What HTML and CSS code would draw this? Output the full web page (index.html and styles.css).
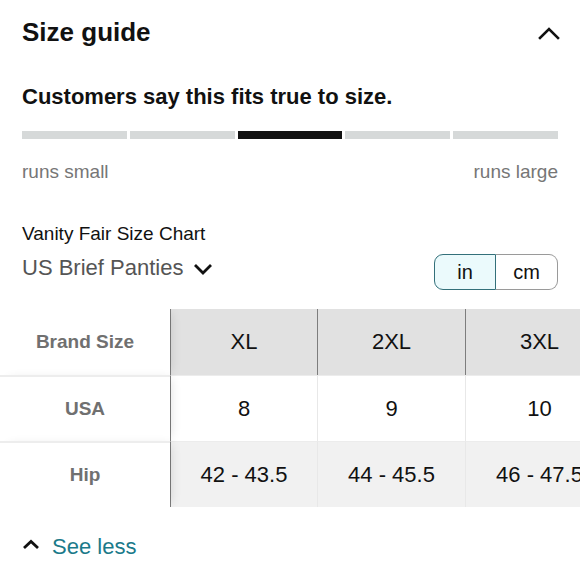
FILE: index.html
```html
<!DOCTYPE html>
<html lang="en">
<head>
<meta charset="utf-8">
<title>Size guide</title>
<link rel="stylesheet" href="styles.css">
</head>
<body>
<div class="pad">
  <div class="head">
    <h2 class="title">Size guide</h2>
    <svg class="chev-up" width="22" height="14" viewBox="0 0 22 14"><path d="M2 12 L11 3 L20 12" fill="none" stroke="#111" stroke-width="2.6" stroke-linecap="square"/></svg>
  </div>
  <p class="fit">Customers say this fits true to size.</p>
  <div class="bars">
    <span class="bar"></span><span class="bar"></span><span class="bar on"></span><span class="bar"></span><span class="bar"></span>
  </div>
  <div class="scale"><span>runs small</span><span>runs large</span></div>
  <div class="chart-name">Vanity Fair Size Chart</div>
  <div class="chart-row">
    <div class="chart-type">US Brief Panties
      <svg class="chev-down" width="20" height="12" viewBox="0 0 20 12"><path d="M2 2 L10 10 L18 2" fill="none" stroke="#111" stroke-width="2.8"/></svg>
    </div>
    <div class="toggle"><span class="opt sel">in</span><span class="opt">cm</span></div>
  </div>
</div>
<div class="table-wrap">
  <div class="grid">
    <div class="cell lab hdr-row">Brand Size</div>
    <div class="cell hd first">XL</div>
    <div class="cell hd">2XL</div>
    <div class="cell hd">3XL</div>

    <div class="cell lab">USA</div>
    <div class="cell dt first">8</div>
    <div class="cell dt">9</div>
    <div class="cell dt">10</div>

    <div class="cell lab">Hip</div>
    <div class="cell dt alt first">42 - 43.5</div>
    <div class="cell dt alt">44 - 45.5</div>
    <div class="cell dt alt">46 - 47.5</div>
  </div>
</div>
<div class="pad">
  <a class="see-less" href="#">
    <svg width="18" height="11" viewBox="0 0 18 11"><path d="M2 9 L9 2.5 L16 9" fill="none" stroke="#111" stroke-width="2.8"/></svg>
    <span>See less</span>
  </a>
</div>
</body>
</html>
```
FILE: styles.css
```css
* { box-sizing: border-box; }
html, body { margin: 0; padding: 0; background: #fff; }
body {
  font-family: "Liberation Sans", Arial, sans-serif;
  color: #111;
  width: 580px;
  overflow: hidden;
}
.pad { padding: 0 22px; }

.head {
  display: flex;
  justify-content: space-between;
  align-items: center;
  padding-top: 17px;
}
.title {
  margin: 0;
  font-size: 26px;
  line-height: 30px;
  font-weight: bold;
  color: #111;
}
.chev-up { margin-right: -2px; margin-top: 2px; }

.fit {
  margin: 37px 0 0;
  font-size: 22px;
  line-height: 26px;
  font-weight: bold;
}

.bars {
  display: flex;
  gap: 3px;
  margin-top: 21px;
  height: 8px;
}
.bar { flex: 1; background: #d6d9d9; }
.bar.on { background: #111; }

.scale {
  display: flex;
  justify-content: space-between;
  margin-top: 22px;
  font-size: 19px;
  line-height: 22px;
  color: #767676;
}

.chart-name {
  margin-top: 40px;
  font-size: 19px;
  line-height: 22px;
  color: #111;
}
.chart-row {
  display: flex;
  justify-content: space-between;
  align-items: flex-start;
  margin-top: 9px;
}
.chart-type {
  margin-top: 2px;
  font-size: 22px;
  line-height: 24px;
  color: #555;
  display: flex;
  align-items: center;
}
.chev-down { margin-left: 10px; margin-top: 1px; }

.toggle {
  display: flex;
  height: 36px;
}
.opt {
  width: 62px;
  display: flex;
  align-items: center;
  justify-content: center;
  font-size: 20px;
  color: #111;
  background: #fff;
  border: 1px solid #9a9a9a;
  border-left: none;
  border-radius: 0 9px 9px 0;
}
.opt.sel {
  background: #ebfafc;
  border: 1.5px solid #33707a;
  border-radius: 9px 0 0 9px;
}

.table-wrap {
  margin-top: 19px;
  width: 580px;
  overflow: hidden;
}
.grid {
  display: grid;
  grid-template-columns: 170px 147px 148px 148px;
  grid-auto-rows: 66px;
  width: 613px;
}
.cell {
  display: flex;
  align-items: center;
  justify-content: center;
  border-top: 1px solid #ececec;
}
.grid > .cell:nth-child(-n+4) { border-top: none; }
.lab {
  font-size: 19px;
  font-weight: bold;
  color: #707070;
  background: #fff;
  position: relative;
  z-index: 1;
  box-shadow: 5px 0 10px -4px rgba(0,0,0,0.12);
  border-top: 2px solid #ededed;
}
.hd {
  font-size: 22px;
  color: #111;
  background: #e1e1e1;
  border-left: 1.5px solid #7d7d7d;
}
.dt {
  font-size: 22px;
  color: #111;
  background: #fff;
  border-left: 1px solid #e8e8e8;
}
.dt.alt { background: #f1f1f1; }
.dt.first { border-left: 1.5px solid #7d7d7d; }

.see-less {
  display: inline-flex;
  align-items: center;
  gap: 12px;
  margin-top: 27px;
  font-size: 22px;
  line-height: 26px;
  color: #1b7a8a;
  text-decoration: none;
}
.see-less svg { margin-top: -5px; }
```
